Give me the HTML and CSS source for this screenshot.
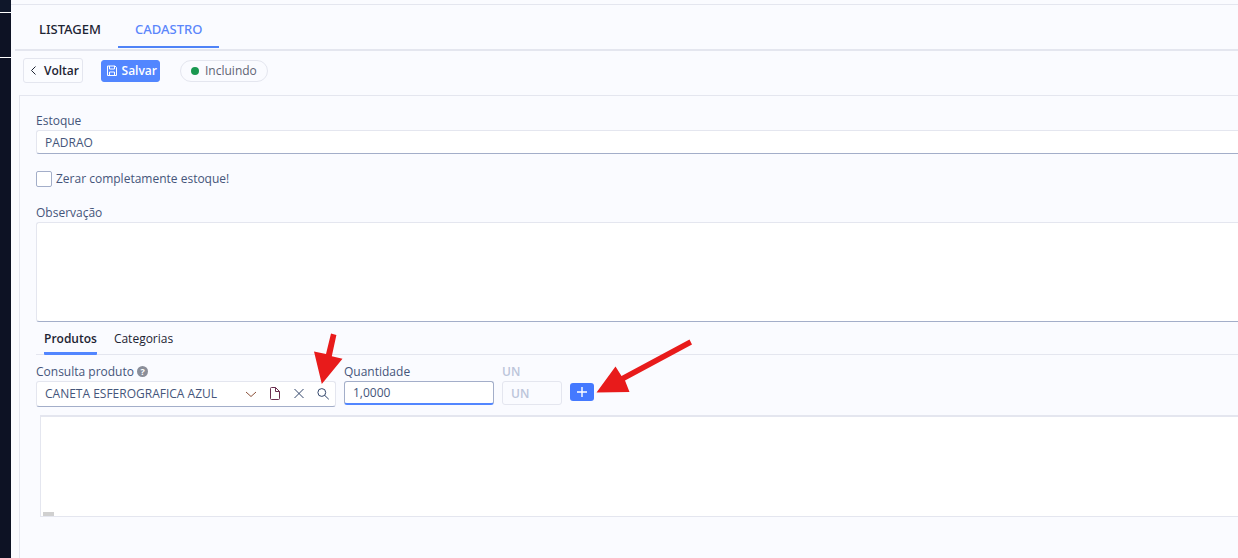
FILE: index.html
```html
<!DOCTYPE html>
<html lang="pt-BR">
<head>
    <meta charset="UTF-8">
    <meta name="viewport" content="width=device-width, initial-scale=1.0">
    <title>Estoque - Cadastro</title>
    <link rel="stylesheet" href="styles.css">
</head>
<body>
    <aside class="sidebar">
        <div class="sidebar-top"></div>
        <div class="sidebar-item"></div>
        <div class="sidebar-rest"></div>
    </aside>

    <main class="content">
        <div class="topbar"></div>

        <nav class="main-tabs">
            <a href="#listagem" class="main-tab">LISTAGEM</a>
            <a href="#cadastro" class="main-tab active">CADASTRO</a>
        </nav>

        <div class="toolbar">
            <button type="button" class="btn btn-back">
                <svg width="10" height="12" viewBox="0 0 10 12" fill="none" stroke="currentColor"><path d="M6.5 1.5 2.5 5.5 6.5 9.5"/></svg>
                Voltar
            </button>
            <button type="button" class="btn btn-save">
                <svg width="12" height="12" viewBox="0 0 12 12" fill="none" stroke="currentColor"><path d="M1.5 1h7.5L10.5 2.5V10.5h-9zM3.5 1v3h5V1M3.5 10.5V7h5v3.5"/></svg>
                Salvar
            </button>
            <span class="status"><span class="status-dot"></span>Incluindo</span>
        </div>

        <form class="panel">
            <div class="field">
                <label for="estoque">Estoque</label>
                <input type="text" id="estoque" class="input" value="PADRAO">
            </div>

            <div class="check">
                <input type="checkbox" id="zerar">
                <label for="zerar">Zerar completamente estoque!</label>
            </div>

            <div class="field">
                <label for="observacao">Observação</label>
                <textarea id="observacao" class="input textarea"></textarea>
            </div>

            <nav class="sub-tabs">
                <a href="#produtos" class="sub-tab active">Produtos</a>
                <a href="#categorias" class="sub-tab">Categorias</a>
            </nav>

            <div class="product-row">
                <div class="field field-product">
                    <label for="produto">Consulta produto <span class="help">?</span></label>
                    <div class="input lookup">
                        <input type="text" id="produto" value="CANETA ESFEROGRAFICA AZUL">
                        <button type="button" class="icon-btn brown" aria-label="Abrir lista">
                            <svg width="14" height="14" viewBox="0 0 14 14"><path d="M2 5l5 4.5L12 5"/></svg>
                        </button>
                        <button type="button" class="icon-btn purple" aria-label="Novo">
                            <svg width="14" height="14" viewBox="0 0 14 14"><path d="M2.5 1.5q0-1 1-1h4l4 4v7q0 1-1 1h-7q-1 0-1-1zM7.5.5v4h4"/></svg>
                        </button>
                        <button type="button" class="icon-btn" aria-label="Limpar">
                            <svg width="14" height="14" viewBox="0 0 14 14"><path d="M2.5 2l9 9M11.5 2l-9 9"/></svg>
                        </button>
                        <button type="button" class="icon-btn" aria-label="Pesquisar">
                            <svg width="14" height="14" viewBox="0 0 14 14"><circle cx="5.8" cy="5.5" r="3.9"/><path d="M8.6 8.3l4.2 4"/></svg>
                        </button>
                    </div>
                </div>
                <div class="field field-qty">
                    <label for="quantidade">Quantidade</label>
                    <input type="text" id="quantidade" class="input focused" value="1,0000">
                </div>
                <div class="field field-unit">
                    <label for="unidade">UN</label>
                    <input type="text" id="unidade" class="input" value="UN" disabled>
                </div>
                <button type="button" class="btn-add" aria-label="Adicionar">
                    <svg width="12" height="12" viewBox="0 0 12 12" fill="none" stroke="currentColor" stroke-width="1.4"><path d="M6 1v10M1 6h10"/></svg>
                </button>
            </div>

            <div class="grid-box"><div class="grid-scroll"></div></div>
        </form>
    </main>

    <!-- Setas de ajuda -->
    <svg class="arrow arrow-search" width="30" height="52" viewBox="0 0 30 52"><path d="M18 0.5 23.4 2 18.8 23.3 29.5 25.7 8.8 51 1 18.5 13 21z"/></svg>
    <svg class="arrow arrow-add" width="98" height="55" viewBox="0 0 98 55"><path d="M93.5 0.5 96 5.5 29 41.5 33.5 53 .5 53.5 19.5 27.5 25.5 37z"/></svg>
</body>
</html>
```
FILE: styles.css
```css
* {
    box-sizing: border-box;
}

body {
    margin: 0;
    display: flex;
    min-height: 100vh;
    position: relative;
    overflow: hidden;
    font-family: "Open Sans", "Noto Sans", sans-serif;
    font-size: 12px;
    line-height: 16px;
    color: #45557a;
    background-color: #fafbff;
}

input,
textarea,
button {
    font: inherit;
    color: inherit;
}

a {
    color: #1d2433;
    text-decoration: none;
}

/* Menu lateral */
.sidebar {
    display: flex;
    flex-direction: column;
    flex: none;
    width: 11px;
    background-color: #0d1224;
}

.sidebar-top {
    height: 13px;
    background-color: #0f172a;
    border-bottom: 1px solid #fff;
}

.sidebar-item {
    height: 45px;
    border-bottom: 1px solid #fff;
}

.sidebar-rest {
    flex: 1;
}

.content {
    flex: 1;
    min-width: 0;
    display: flex;
    flex-direction: column;
}

.topbar {
    height: 5px;
    border-bottom: 1px solid #e4e6ef;
}

/* Abas principais */
.main-tabs {
    display: flex;
    margin-left: 4px;
    padding: 0 7px 1px 7px;
    border-bottom: 2px solid #e4e6ef;
}

.main-tab {
    height: 43px;
    padding: 15px 17px 0;
    font-family: "Noto Sans", sans-serif;
    font-size: 13px;
    line-height: 18px;
    font-weight: 500;
    border-bottom: 2px solid transparent;
}

.main-tab.active {
    color: #5b86fb;
    border-bottom-color: #4f83f7;
}

/* Botoes */
.toolbar {
    display: flex;
    align-items: center;
    padding: 7px 12px 12px;
}

.btn {
    display: flex;
    align-items: center;
    justify-content: space-between;
    height: 25px;
    padding: 0 3px 0 5px;
    border: 1px solid #e4e6ef;
    border-radius: 3px;
    background-color: #fbfcff;
    color: #1d2433;
    font-weight: 600;
    cursor: pointer;
}

.btn-back {
    width: 60px;
    margin-right: 18px;
}

.btn-save {
    width: 59px;
    height: 22px;
    padding: 0 2px 0 4px;
    margin-right: 20px;
    border-color: #5286ff;
    background-color: #5286ff;
    color: #fff;
}

.status {
    display: flex;
    align-items: center;
    gap: 6px;
    height: 22px;
    padding: 0 10px;
    border: 1px solid #e4e6ef;
    border-radius: 11px;
    color: #5f6473;
}

.status-dot {
    width: 8px;
    height: 8px;
    border-radius: 50%;
    background-color: #1a9850;
}

/* Formulario */
.panel {
    flex: 1;
    margin-left: 8px;
    padding: 17px 0 41px 16px;
    border: 1px solid #e4e6ef;
    border-width: 1px 0 0 1px;
}

.field {
    display: flex;
    flex-direction: column;
    gap: 1px;
}

.input {
    width: 100%;
    height: 24px;
    padding: 0 8px;
    border: 1px solid #e4e6ef;
    border-bottom-color: #a3aec9;
    border-radius: 3px;
    background-color: #fff;
    outline: none;
}

.panel > .field .input {
    border-right: 0;
    border-radius: 3px 0 0 3px;
}

.textarea {
    display: block;
    height: 100px;
    resize: none;
}

.check {
    display: flex;
    align-items: center;
    gap: 4px;
    margin: 17px 0 18px;
}

.check input {
    appearance: none;
    width: 16px;
    height: 16px;
    margin: 0;
    border: 1px solid #a3aec9;
    border-radius: 2px;
    background-color: #fff;
}

.sub-tabs {
    display: flex;
    gap: 17px;
    padding: 9px 8px 0;
    border-bottom: 1px solid #e4e6ef;
}

.sub-tab {
    height: 24px;
    margin-bottom: -1px;
}

.sub-tab.active {
    font-weight: 600;
    border-bottom: 3px solid #5286ff;
    border-radius: 1px;
}

.product-row {
    display: flex;
    align-items: flex-start;
    gap: 8px;
    margin-top: 9px;
}

.field-product {
    width: 300px;
}

.field-qty {
    width: 150px;
}

.field-unit {
    width: 60px;
    color: #bcc5da;
    font-weight: 600;
}

.field-unit .input {
    border-color: #e4e6ef;
    background-color: #fafbff;
}

.help {
    display: inline-block;
    width: 11px;
    height: 11px;
    border-radius: 50%;
    background-color: #8a8e99;
    color: #fff;
    font-size: 9px;
    line-height: 11px;
    font-weight: 700;
    text-align: center;
    vertical-align: 1px;
}

.lookup {
    display: flex;
    align-items: center;
    gap: 10px;
    height: 26px;
    padding-right: 5px;
}

.lookup input {
    flex: 1;
    min-width: 0;
    padding: 0;
    border: 0;
    background: none;
    outline: none;
}

.icon-btn {
    display: flex;
    padding: 0;
    border: 0;
    background: none;
    color: #31456a;
    cursor: pointer;
}

.icon-btn.brown {
    color: #8a5038;
}

.icon-btn.purple {
    color: #6b2f50;
}

.icon-btn svg {
    fill: none;
    stroke: currentColor;
}

.input.focused {
    border-color: #a3aec9;
    border-bottom: 2px solid #5286ff;
}

.btn-add {
    display: flex;
    align-items: center;
    justify-content: center;
    width: 24px;
    height: 18px;
    margin-top: 19px;
    padding: 0;
    border: 0;
    border-radius: 3px;
    background-color: #4479ff;
    color: #fff;
    cursor: pointer;
}

.grid-box {
    display: flex;
    align-items: flex-end;
    height: 102px;
    margin: 8px 0 0 4px;
    padding-left: 2px;
    border: 1px solid #e4e6ef;
    border-width: 2px 0 1px 1px;
    background-color: #fff;
}

.grid-scroll {
    width: 11px;
    height: 4px;
    background-color: #d0d0d0;
}

/* Setas por cima da tela */
.arrow {
    position: absolute;
    fill: #e81b1b;
    pointer-events: none;
}

.arrow-search {
    top: 333px;
    left: 313px;
}

.arrow-add {
    top: 339px;
    left: 596px;
}
```
